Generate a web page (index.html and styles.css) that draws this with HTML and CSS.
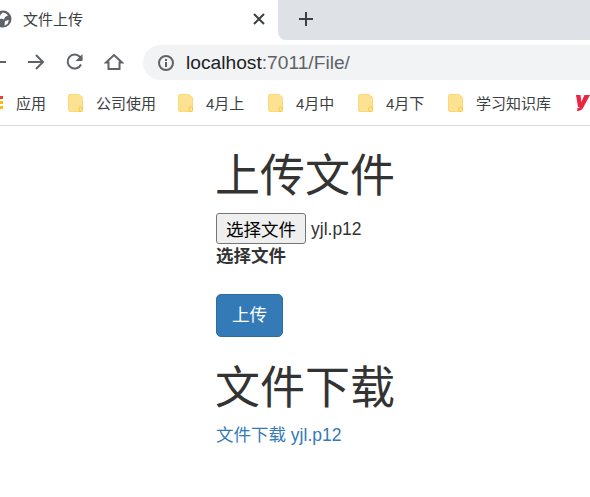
FILE: index.html
```html
<!DOCTYPE html>
<html lang="zh-CN">
<head>
    <meta charset="UTF-8">
    <meta name="viewport" content="width=device-width, initial-scale=1.0">
    <title>文件上传</title>
    <link rel="stylesheet" href="styles.css">
</head>
<body>
    <!-- Browser chrome -->
    <div class="tab-strip">
        <div class="tab">
            <svg class="tab-globe" width="18" height="18" viewBox="0 0 18 18"><circle cx="9" cy="9" r="8.500" fill="#5f6368"/><path d="M9 2.500q3.500.5 5 3l-3 1.500-1 2.500-2.500-1-3 1.500-1.500-2.500 3-1.500 1-2zM11 11l4-1-1.500 4-3 1.500z" fill="#fff"/></svg>
            <span class="tab-title">文件上传</span>
            <svg class="tab-close" width="12" height="12" viewBox="0 0 12 12"><path d="M1 1l10 10M11 1L1 11" stroke="#3c4043" stroke-width="2"/></svg>
        </div>
        <div class="tab-rest">
            <svg class="new-tab" width="16" height="16" viewBox="0 0 16 16"><path d="M8 1v14M1 8h14" stroke="#3c4043" stroke-width="2"/></svg>
        </div>
    </div>
    <div class="toolbar">
        <svg class="nav-back" width="12" height="18" viewBox="0 0 12 18"><path d="M-8 9H6" stroke="#5f6368" stroke-width="2" fill="none"/></svg>
        <svg class="nav-icon" width="20" height="20" viewBox="0 0 20 20"><path d="M2 10h15M10 3l7 7-7 7" stroke="#5f6368" stroke-width="2" fill="none"/></svg>
        <svg class="nav-icon" width="20" height="20" viewBox="0 0 20 20"><path d="M16 12.500A7 7 0 1 1 14.800 4.800L17 7" stroke="#5f6368" stroke-width="2" fill="none"/><path d="M17.500 2v7h-7z" fill="#5f6368"/></svg>
        <svg class="nav-icon" width="20" height="20" viewBox="0 0 20 20"><path d="M10 3l8 7.500h-2.500V17h-11V10.500H2z" stroke="#5f6368" stroke-width="2" fill="none"/></svg>
        <div class="omnibox">
            <svg width="18" height="18" viewBox="0 0 18 18"><circle cx="9" cy="9" r="7" fill="none" stroke="#5f6368" stroke-width="2"/><path d="M9 8v5M9 5v2" stroke="#5f6368" stroke-width="2"/></svg>
            <span class="url"><span class="url-host">localhost</span>:7011/File/</span>
        </div>
    </div>
    <div class="bookmarks">
        <span class="apps-icon"></span>
        <span class="bm-label apps-label">应用</span>
        <svg class="folder" width="15" height="18" viewBox="0 0 15 18"><path d="M2 .5h9l3.500 3V15l-2 2.500H2A1.500 1.500 0 0 1 .5 16V2A1.500 1.500 0 0 1 2 .5z" fill="#fde293" stroke="#f9d978"/><rect x="11" y="13" width="3.500" height="4.500" rx="1" fill="#fde293" stroke="#f5c842"/></svg><span class="bm-label">公司使用</span>
        <svg class="folder" width="15" height="18" viewBox="0 0 15 18"><path d="M2 .5h9l3.500 3V15l-2 2.500H2A1.500 1.500 0 0 1 .5 16V2A1.500 1.500 0 0 1 2 .5z" fill="#fde293" stroke="#f9d978"/><rect x="11" y="13" width="3.500" height="4.500" rx="1" fill="#fde293" stroke="#f5c842"/></svg><span class="bm-label bm-month">4月上</span>
        <svg class="folder" width="15" height="18" viewBox="0 0 15 18"><path d="M2 .5h9l3.500 3V15l-2 2.500H2A1.500 1.500 0 0 1 .5 16V2A1.500 1.500 0 0 1 2 .5z" fill="#fde293" stroke="#f9d978"/><rect x="11" y="13" width="3.500" height="4.500" rx="1" fill="#fde293" stroke="#f5c842"/></svg><span class="bm-label bm-month">4月中</span>
        <svg class="folder" width="15" height="18" viewBox="0 0 15 18"><path d="M2 .5h9l3.500 3V15l-2 2.500H2A1.500 1.500 0 0 1 .5 16V2A1.500 1.500 0 0 1 2 .5z" fill="#fde293" stroke="#f9d978"/><rect x="11" y="13" width="3.500" height="4.500" rx="1" fill="#fde293" stroke="#f5c842"/></svg><span class="bm-label bm-month">4月下</span>
        <svg class="folder" width="15" height="18" viewBox="0 0 15 18"><path d="M2 .5h9l3.500 3V15l-2 2.500H2A1.500 1.500 0 0 1 .5 16V2A1.500 1.500 0 0 1 2 .5z" fill="#fde293" stroke="#f9d978"/><rect x="11" y="13" width="3.500" height="4.500" rx="1" fill="#fde293" stroke="#f5c842"/></svg><span class="bm-label">学习知识库</span>
        <svg class="bm-logo" width="15" height="18" viewBox="0 0 15 18"><path d="M1 1h4.500l.8 7L9.500 1H15L8 14q-1.500 3-6 3l.5-3q2 0 2.500-1H3z" fill="#ee2344"/></svg>
    </div>

    <!-- Page -->
    <div class="page">
        <h2>上传文件</h2>
        <div class="file-row">
            <button class="file-btn">选择文件</button>
            <span class="file-name">yjl.p12</span>
        </div>
        <label class="file-label">选择文件</label>
        <button class="upload-btn">上传</button>
        <h2 class="download-title">文件下载</h2>
        <a class="download-link" href="#">文件下载 yjl.p12</a>
    </div>
</body>
</html>
```

FILE: styles.css
```css
* {
    margin: 0;
    padding: 0;
    box-sizing: border-box;
}

body {
    font-family: "Liberation Sans", "Noto Sans CJK SC", sans-serif;
    background: white;
    overflow: hidden;
}

.tab-strip {
    display: flex;
    height: 40px;
}

.tab {
    width: 278px;
    display: flex;
    align-items: center;
    color: #3c4043;
    font-size: 15px;
}

.tab-globe {
    flex: none;
    margin-left: -6px;
    margin-top: -3px;
}

.tab-title {
    margin-left: 11px;
    margin-bottom: 3px;
}

.tab-close {
    margin-left: auto;
    margin-right: 13px;
    margin-top: -3px;
}

.tab-rest {
    flex: 1;
    background: #dee1e6;
    border-bottom-left-radius: 8px;
    display: flex;
    align-items: center;
    padding-left: 20px;
}

.new-tab {
    margin-top: -3px;
}

.toolbar {
    height: 40px;
    padding-top: 5px;
    display: flex;
    align-items: flex-start;
}

.nav-back {
    margin-top: 8px;
}

.nav-icon {
    margin-top: 7px;
    margin-left: 19px;
}

.toolbar svg:nth-child(2) {
    margin-left: 14px;
}

.omnibox {
    margin-left: 19px;
    flex: 1;
    height: 35px;
    background: #f1f3f4;
    border-radius: 18px 0 0 18px;
    display: flex;
    align-items: center;
    padding-left: 14px;
    gap: 11px;
}

.url {
    font-size: 19.2px;
    color: #5f6368;
}

.url-host {
    color: #202124;
}

.bookmarks {
    height: 46px;
    border-bottom: 1px solid #d9dbde;
    display: flex;
    align-items: center;
    font-size: 15px;
    color: #3c4043;
    white-space: nowrap;
    overflow: hidden;
}

.apps-icon {
    width: 3px;
    height: 13px;
    flex: none;
    background: linear-gradient(#ea4335 0 3px, white 3px 5px, #fbbc05 5px 8px, white 8px 10px, #fbbc05 10px 13px);
}

.bm-label {
    margin-left: 13px;
    margin-right: 22px;
}

.bm-month {
    margin-right: 23.66px;
}

.folder {
    flex: none;
}

.bm-logo {
    flex: none;
    margin-left: 2px;
}

.page {
    padding-left: 216px;
    color: #333;
    font-size: 17.5px;
    line-height: 1.43;
}

h2 {
    font-size: 45px;
    font-weight: 400;
    line-height: 1.1;
    margin-top: 26px;
    margin-bottom: 11px;
    margin-left: -1px;
}

.download-title {
    margin-top: 27px;
    margin-bottom: 10px;
}

.file-row {
    display: flex;
    align-items: center;
}

.file-btn {
    width: 90px;
    height: 31px;
    font-family: inherit;
    font-size: 17.5px;
    color: black;
    background: #efefef;
    border: 1px solid #767676;
    border-radius: 3px;
}

.file-name {
    margin-left: 5px;
    padding-top: 3px;
}

.file-label {
    display: block;
    font-weight: bold;
    margin-bottom: 25px;
}

.upload-btn {
    display: block;
    width: 67px;
    height: 43px;
    padding-bottom: 3px;
    font-family: inherit;
    font-size: 17.5px;
    color: white;
    background: #337ab7;
    border: 1px solid #2e6da4;
    border-radius: 5px;
}

.download-link {
    color: #337ab7;
    text-decoration: none;
}
```
